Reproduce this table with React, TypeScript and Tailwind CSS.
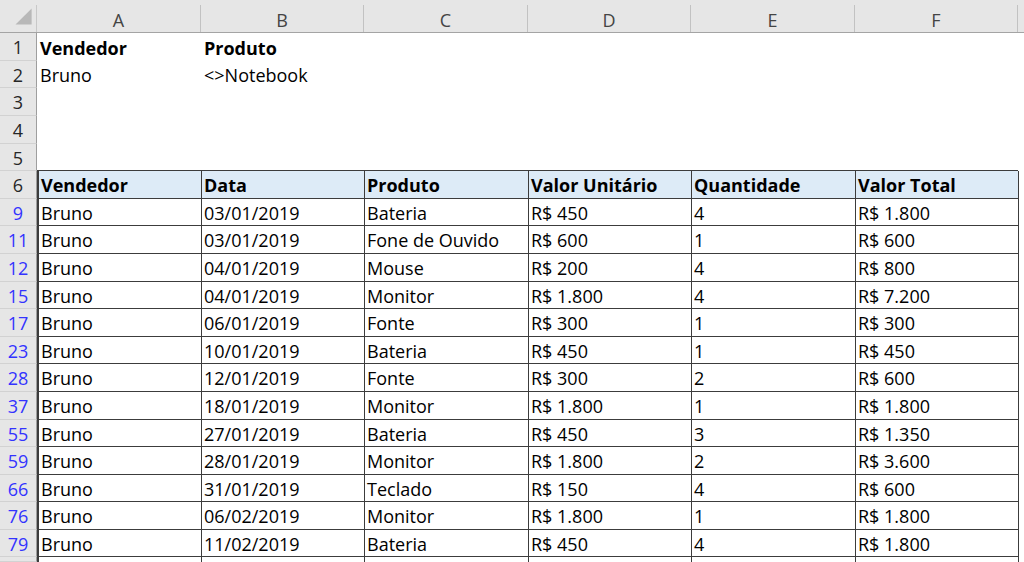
import React from 'react';

interface Row {
  n: string;
  cells: string[];
}

const cols = [
  { k: 'A', w: 'w-[164px]' },
  { k: 'B', w: 'w-[163px]' },
  { k: 'C', w: 'w-[164px]' },
  { k: 'D', w: 'w-[163px]' },
  { k: 'E', w: 'w-[164px]' },
  { k: 'F', w: 'w-[163px]' },
];

const heights = [28, 27, 28, 28, 27, 28, 27, 28, 28, 27, 28, 27, 28, 28, 27, 28, 27, 28, 27];

const top: Row[] = [
  { n: '1', cells: ['Vendedor', 'Produto'] },
  { n: '2', cells: ['Bruno', '<>Notebook'] },
  { n: '3', cells: [] },
  { n: '4', cells: [] },
  { n: '5', cells: [] },
];

const head = ['Vendedor', 'Data', 'Produto', 'Valor Unitário', 'Quantidade', 'Valor Total'];

const data: Row[] = [
  { n: '9', cells: ['Bruno', '03/01/2019', 'Bateria', 'R$ 450', '4', 'R$ 1.800'] },
  { n: '11', cells: ['Bruno', '03/01/2019', 'Fone de Ouvido', 'R$ 600', '1', 'R$ 600'] },
  { n: '12', cells: ['Bruno', '04/01/2019', 'Mouse', 'R$ 200', '4', 'R$ 800'] },
  { n: '15', cells: ['Bruno', '04/01/2019', 'Monitor', 'R$ 1.800', '4', 'R$ 7.200'] },
  { n: '17', cells: ['Bruno', '06/01/2019', 'Fonte', 'R$ 300', '1', 'R$ 300'] },
  { n: '23', cells: ['Bruno', '10/01/2019', 'Bateria', 'R$ 450', '1', 'R$ 450'] },
  { n: '28', cells: ['Bruno', '12/01/2019', 'Fonte', 'R$ 300', '2', 'R$ 600'] },
  { n: '37', cells: ['Bruno', '18/01/2019', 'Monitor', 'R$ 1.800', '1', 'R$ 1.800'] },
  { n: '55', cells: ['Bruno', '27/01/2019', 'Bateria', 'R$ 450', '3', 'R$ 1.350'] },
  { n: '59', cells: ['Bruno', '28/01/2019', 'Monitor', 'R$ 1.800', '2', 'R$ 3.600'] },
  { n: '66', cells: ['Bruno', '31/01/2019', 'Teclado', 'R$ 150', '4', 'R$ 600'] },
  { n: '76', cells: ['Bruno', '06/02/2019', 'Monitor', 'R$ 1.800', '1', 'R$ 1.800'] },
  { n: '79', cells: ['Bruno', '11/02/2019', 'Bateria', 'R$ 450', '4', 'R$ 1.800'] },
];

function RowHead({ n, blue }: { n: string; blue?: boolean }) {
  return (
    <div
      className={`w-[37px] shrink-0 h-full flex items-center justify-center pt-[2px] bg-[#e6e6e6] border-r border-b border-r-[#9e9e9e] border-b-[#d2d2d2] ${
        blue ? 'text-[#3333ff]' : 'text-[#262626]'
      }`}
    >
      {n}
    </div>
  );
}

export default function App() {
  return (
    <div className="w-[1024px] h-[562px] overflow-hidden bg-white text-[18px] text-black font-['Open_Sans',sans-serif] flex flex-col">
      {/* column letters */}
      <div className="h-[33px] shrink-0 flex bg-[#e6e6e6] border-b border-[#a4a4a4] text-[#444]">
        <div className="w-[37px] shrink-0 relative border-r border-[#c8c8c8] mt-[5px]">
          <svg width="37" height="28" className="absolute left-0 top-[-5px]" viewBox="0 0 37 33">
            <polygon points="15,29 34,29 34,10" fill="#b8b8b8" />
          </svg>
        </div>
        {cols.map((c) => (
          <div key={c.k} className={`${c.w} shrink-0 mt-[5px] border-r border-[#c2c2c2] flex items-center justify-center pt-[3px]`}>
            {c.k}
          </div>
        ))}
        <div className="flex-1" />
      </div>

      {/* rows 1-5 */}
      {top.map((r, i) => (
        <div key={r.n} className={`${heights[i] === 28 ? 'h-[28px]' : 'h-[27px]'} shrink-0 flex`}>
          <RowHead n={r.n} />
          {cols.map((c, j) => (
            <div
              key={c.k}
              className={`${c.w} shrink-0 flex items-center pl-[3px] pt-[2px] whitespace-nowrap ${i === 4 ? 'border-b border-[#3c3c3c]' : ''} ${
                r.n === '1' ? 'font-bold' : 'font-normal'
              }`}
            >
              {r.cells[j] ?? ''}
            </div>
          ))}
          <div className="flex-1" />
        </div>
      ))}

      {/* table header row 6 */}
      <div className="h-[28px] shrink-0 flex">
        <RowHead n="6" />
        {cols.map((c, j) => (
          <div
            key={c.k}
            className={`${c.w} shrink-0 flex items-center pl-[2px] pt-[2px] font-bold whitespace-nowrap bg-[#ddebf7] border-b border-[#3c3c3c] ${
              j === 0 ? 'border-l-2' : 'border-l'
            }`}
          >
            {head[j]}
          </div>
        ))}
        <div className="flex-1 border-l border-[#3c3c3c]" />
      </div>

      {/* filtered data rows */}
      {data.map((r, i) => (
        <div key={r.n} className={`${heights[i + 6] === 28 ? 'h-[28px]' : 'h-[27px]'} shrink-0 flex`}>
          <RowHead n={r.n} blue />
          {cols.map((c, j) => (
            <div
              key={c.k}
              className={`${c.w} shrink-0 flex items-center pl-[2px] pt-[2px] whitespace-nowrap border-b border-[#3c3c3c] ${
                j === 0 ? 'border-l-2' : 'border-l'
              }`}
            >
              {r.cells[j]}
            </div>
          ))}
          <div className="flex-1 border-l border-[#3c3c3c]" />
        </div>
      ))}

      {/* partially visible next row */}
      <div className="flex-1 flex">
        <RowHead n="" />
        {cols.map((c, j) => (
          <div key={c.k} className={`${c.w} shrink-0 border-[#3c3c3c] ${j === 0 ? 'border-l-2' : 'border-l'}`} />
        ))}
        <div className="flex-1 border-l border-[#3c3c3c]" />
      </div>
    </div>
  );
}
